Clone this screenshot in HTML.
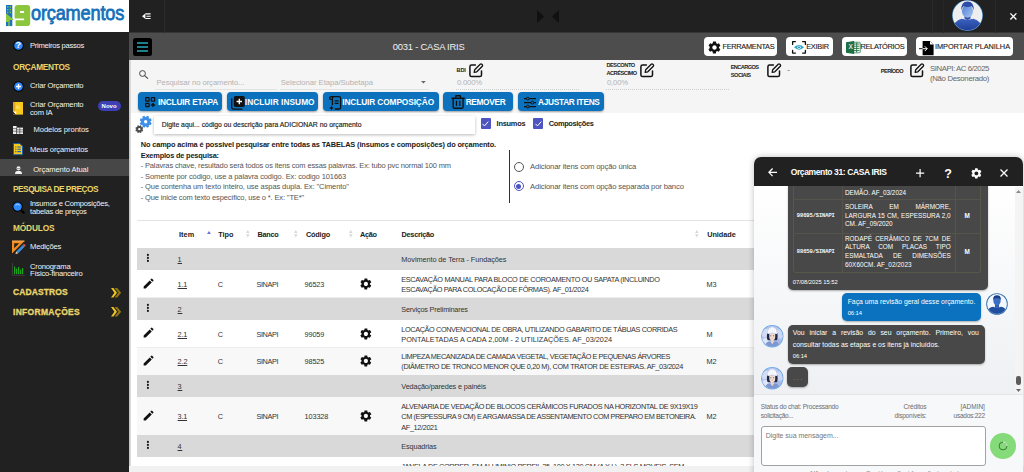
<!DOCTYPE html>
<html lang="pt-BR">
<head>
<meta charset="utf-8">
<title>i9 Orçamentos - 0031 - CASA IRIS</title>
<style>
*{box-sizing:border-box;margin:0;padding:0}
html,body{width:1024px;height:472px;overflow:hidden;background:#fff}
body{font-family:"Liberation Sans",sans-serif;font-size:9px;color:#333;position:relative}
.abs{position:absolute}
.t{position:absolute;white-space:nowrap;line-height:12px}
svg{position:absolute;display:block;overflow:visible}

/* ---------- sidebar ---------- */
#sidebar{position:absolute;left:0;top:0;width:129px;height:472px;background:#212121;color:#f2f2f2;z-index:5}
#logo{position:absolute;left:0;top:0;width:129px;height:32px;background:#fff}
#sidebar .it{position:absolute;left:30px;white-space:nowrap;font-size:7.600px;line-height:8px;color:#f4f4f4;letter-spacing:-.1px}
#sidebar .hd{position:absolute;left:13px;white-space:nowrap;font-size:8.3px;font-weight:bold;color:#e9d56c;line-height:12px;letter-spacing:-.25px}
#sidebar .active{position:absolute;left:0;top:158.800px;width:129px;height:17.300px;background:#474747}
.novo{position:absolute;left:97.600px;top:100.600px;width:23px;height:10.300px;border-radius:5.200px;background:#3d3fb5;color:#fff;font-size:6px;font-weight:bold;line-height:10.500px;text-align:center}

#brand{left:31.200px;top:1.300px;font-size:20.200px;line-height:24px;color:#1470b9;white-space:nowrap;transform:scaleX(.9);transform-origin:0 0;-webkit-text-stroke:.8px #1470b9;letter-spacing:-.2px}
#sidebar .hd.k{font-size:8.500px;letter-spacing:.5px;-webkit-text-stroke:.3px #e9d56c}
/* ---------- top bars ---------- */
#topbar{position:absolute;left:129px;top:0;width:895px;height:33px;background:#212121;border-bottom:1px solid #363636}
#subbar{position:absolute;left:129px;top:33px;width:895px;height:27px;background:#4d4d4d}
.wbtn{position:absolute;top:37px;height:19px;background:#fff;border-radius:4px;color:#222;font-size:7.4px;line-height:19.5px;white-space:nowrap}
.wbtn span{position:absolute;top:0;letter-spacing:-.1px;color:#1a1a1a;-webkit-text-stroke:.12px #1a1a1a}

/* ---------- toolbar ---------- */
#filters{position:absolute;left:129px;top:60px;width:895px;height:53px;background:#f5f5f5}
.lbl{position:absolute;font-size:5.6px;font-weight:bold;color:#222;line-height:8px;white-space:nowrap;letter-spacing:-.1px}
.ph{position:absolute;font-size:7.700px;color:#b3b3b3;white-space:nowrap;line-height:10px}
.bbtn{position:absolute;top:92px;height:19px;background:#0d72bd;border-radius:4px;color:#fff;font-weight:bold;font-size:8.3px;line-height:20.400px;white-space:nowrap;box-shadow:0 1px 2px rgba(0,0,0,.35)}
.bbtn span{position:absolute;top:0;letter-spacing:-.15px}

.cb{position:absolute;top:118.400px;width:10.300px;height:10.300px;background:#4f55c0;border-radius:1px}
.hb{font-size:7.400px;font-weight:bold;color:#1a1a1a}
.hl{font-size:7.500px;color:#555}
/* ---------- table ---------- */
#grid{position:absolute;left:137px;top:220px;width:640px;border-top:1px solid #e3e3e3}
.row{position:absolute;width:640px}
.row.g{background:#d9d9d9}
.row.s{background:#f8f8f8}
.row.w{background:#fff;border-bottom:1px solid #eee}
.c{position:absolute;white-space:nowrap;font-size:7.3px;line-height:10.5px;color:#333;letter-spacing:-.1px}
.c.u{text-decoration:underline}
.th{position:absolute;font-size:7.3px;font-weight:bold;color:#222;white-space:nowrap;line-height:12px;letter-spacing:-.15px}

/* ---------- chat ---------- */
#chat{position:absolute;left:754px;top:157px;width:269px;height:330px;background:#f7f8fa;border-radius:7px 7px 0 0;box-shadow:0 0 6px rgba(0,0,0,.25);overflow:hidden;z-index:8}
#chat .head{position:absolute;left:0;top:0;width:269px;height:29.300px;background:#212121;color:#fff}
#chat .body{position:absolute;left:0;top:29px;width:269px;height:209px;background:linear-gradient(180deg,#ffffff 0%,#eef0f3 100%);overflow:hidden}
.bub{position:absolute;border-radius:5px;color:#fff;font-size:7.3px;line-height:11.3px;box-shadow:0 1px 2px rgba(0,0,0,.3)}
.bub.d{background:#484848}
.bub.b{background:#0b72c0}
.tm{position:absolute;font-size:5.8px;color:#fff;white-space:nowrap;line-height:8px}
.ct{position:absolute;white-space:nowrap;font-size:6.400px;line-height:9px;color:#fff}
.j{white-space:normal!important;text-align:justify;text-align-last:justify}
.mono{position:absolute;white-space:nowrap;font-family:"Liberation Mono",monospace;font-size:5.300px;line-height:8px;color:#fff;-webkit-text-stroke:.15px #fff}
.cm{position:absolute;white-space:nowrap;font-size:6.850px;line-height:11px;color:#fff}
.ft{position:absolute;white-space:nowrap;font-size:6.500px;line-height:10px;color:#6b6b6b}
</style>
</head>
<body>

<!-- ======= TOP BAR ======= -->
<div id="topbar">
  <svg style="left:13px;top:12.6px" width="9" height="7" viewBox="0 0 9 7"><path d="M0 3.2L3.4 .4V6Z" fill="#fff"/><path d="M3.4 .9H8.6M4.4 3.2H8.6M3.4 5.5H8.6" stroke="#fff" stroke-width="1.1"/></svg>
  <div class="abs" style="left:34.5px;top:0;width:1px;height:33px;background:#2b2b2b"></div>
  <svg style="left:407.900px;top:10.400px" width="22" height="13" viewBox="0 0 22 13"><path d="M0 0L7.200 6.500L0 13Z" fill="#111"/><path d="M22 0L15 6.500L22 13Z" fill="#111"/></svg>
  <div class="abs" style="left:802.500px;top:0;width:1px;height:33px;background:#292929"></div>
  <div class="abs" style="left:813.500px;top:0;width:1px;height:33px;background:#272727"></div>
  <div class="abs" style="left:866.400px;top:0;width:1px;height:33px;background:#292929"></div>
  <svg style="left:822.800px;top:-.1px" width="31" height="31" viewBox="0 0 31 31"><defs><clipPath id="av"><circle cx="15.500" cy="15.500" r="14.900"/></clipPath><linearGradient id="avg" x1="0" y1="0" x2="1" y2="1"><stop offset="0" stop-color="#4f7dd6"/><stop offset="1" stop-color="#a9c6f0"/></linearGradient><linearGradient id="avb" x1="0" y1="0" x2="0" y2="1"><stop offset="0" stop-color="#3a62c0"/><stop offset="1" stop-color="#1f3c94"/></linearGradient></defs><circle cx="15.500" cy="15.500" r="15.500" fill="#2a6fa8"/><circle cx="15.500" cy="15.500" r="14.900" fill="#eeeeee"/><g clip-path="url(#av)"><path d="M.5 31Q1.500 20.500 9.500 18.800L15.500 19.800L21.500 18.800Q29.500 20.500 30.500 31Z" fill="url(#avb)"/><path d="M12.500 14H18.500V18.600L15.500 20L12.500 18.600Z" fill="#2b4aa6"/><ellipse cx="15.500" cy="11.300" rx="5.500" ry="6.400" fill="url(#avg)"/><path d="M9.300 10.500Q8.800 1.500 15.500 1.500Q22.200 1.500 21.700 10.500Q21 7 19.500 6.300Q15.500 7.500 11.500 6.300Q10 7 9.300 10.500Z" fill="#2d4ca6"/></g></svg>
  <svg style="left:880.600px;top:12.700px" width="6.800" height="6.800" viewBox="0 0 7 7"><path d="M.4 .4L6.600 6.600M6.600 .4L.4 6.600" stroke="#fff" stroke-width="1.400"/></svg>
</div>
<div id="subbar">
  <div class="abs" style="left:4px;top:5px;width:19px;height:18px;background:#000;border-radius:2.5px"></div>
  <svg style="left:8px;top:9px" width="11" height="10" viewBox="0 0 11 10"><path d="M0 1H11M0 5H11M0 9H11" stroke="#2aa9ba" stroke-width="1.6"/></svg>
  <span class="t" style="letter-spacing:-0.209px;left:263.800px;top:8.300px;font-size:9.400px;color:#f2f2f2">0031 - CASA IRIS</span>
</div>
<div class="wbtn" style="left:704.2px;width:73.300px">
  <svg style="left:3.300px;top:2.900px" width="15" height="15" viewBox="0 0 24 24"><path fill="#111" d="M19.140 12.940c.04-.3.060-.61.060-.94s-.02-.64-.07-.94l2.030-1.580a.49.49 0 0 0 .12-.61l-1.920-3.320a.488.488 0 0 0-.59-.22l-2.390.96c-.5-.38-1.030-.7-1.620-.94l-.36-2.540a.484.484 0 0 0-.48-.41h-3.840c-.24 0-.43.170-.47.410l-.36 2.540c-.59.240-1.130.570-1.620.94l-2.390-.96c-.22-.08-.47 0-.59.220L2.740 8.870c-.12.210-.08.470.12.610l2.030 1.580c-.5.300-.9.630-.9.940s.2.640.7.940l-2.030 1.580a.49.490 0 0 0-.12.610l1.920 3.320c.12.220.37.290.59.220l2.390-.96c.5.380 1.030.7 1.620.94l.36 2.540c.5.240.24.410.48.410h3.840c.24 0 .44-.17.470-.41l.36-2.540c.59-.24 1.130-.56 1.620-.94l2.390.96c.22.080.47 0 .59-.22l1.920-3.320c.12-.22.070-.47-.12-.61l-2.010-1.580zM12 15.600c-1.980 0-3.600-1.620-3.600-3.600s1.620-3.600 3.600-3.600 3.600 1.620 3.600 3.600-1.620 3.600-3.600 3.600z"/></svg>
  <span style="letter-spacing:-0.316px;left:18.300px">FERRAMENTAS</span>
</div>
<div class="wbtn" style="left:786.2px;width:47px">
  <svg style="left:5.500px;top:4.300px" width="14" height="12.700" viewBox="0 0 14 12.700"><path d="M.6 3.400V.6H3.400M10.600 .6H13.400V3.400M13.400 9.300V12.100H10.600M3.400 12.100H.6V9.300" stroke="#111" stroke-width="1.300" fill="none" stroke-linecap="round" stroke-linejoin="round"/><path d="M2 6.350Q7 1.700 12 6.350Q7 11 2 6.350Z" fill="#26a6c9"/><circle cx="7" cy="6.350" r="1.700" fill="#e9f7fb"/><circle cx="7" cy="6.350" r=".9" fill="#1b6f8a"/></svg>
  <span style="letter-spacing:-0.27px;left:20px">EXIBIR</span>
</div>
<div class="wbtn" style="left:842.2px;width:65px">
  <svg style="left:3.800px;top:3.800px" width="14.500" height="13" viewBox="0 0 14.500 13"><rect x="5" y="1.200" width="9.300" height="10.600" rx=".8" fill="#fff" stroke="#1d7044" stroke-width=".7"/><path d="M8 3H13.500M8 5.200H13.500M8 7.400H13.500M8 9.600H13.500M10.700 1.500V11.500" stroke="#1d7044" stroke-width=".9"/><path d="M0 1.300L8.200 0V13L0 11.700Z" fill="#1d7044"/></svg>
  <span class="abs" style="left:6.200px;top:0;font-size:6.500px;font-weight:bold;color:#fff;line-height:19.500px">X</span>
  <span style="letter-spacing:-0.328px;left:18.300px">RELATÓRIOS</span>
</div>
<div class="wbtn" style="left:916px;width:97px">
  <svg style="left:3.400px;top:3.600px" width="15" height="14.200" viewBox="0 0 15 14.200"><path d="M3.600 0H11L14.600 3.600V14.200H3.600Z" fill="#000"/><path d="M11 0V3.600H14.600Z" fill="#fff"/><path d="M0 7.700H8.200M5.800 5.300L8.200 7.700L5.800 10.100" stroke="#fff" stroke-width="1" fill="none"/><path d="M0 7.700H3.600" stroke="#111" stroke-width="1"/></svg>
  <span style="letter-spacing:-0.066px;left:19px">IMPORTAR PLANILHA</span>
</div>
<div id="filters"></div>
<div class="abs" style="left:129px;top:60px;width:2px;height:412px;background:linear-gradient(90deg,#bdbdbd,#e6e6e6);z-index:6"></div>
<!-- search / filters -->
<svg style="left:139.300px;top:69.500px" width="9.500" height="9" viewBox="0 0 9.500 9"><circle cx="3.500" cy="3.500" r="2.900" stroke="#444" stroke-width="1" fill="none"/><path d="M5.600 5.600L9 8.700" stroke="#444" stroke-width="1.100"/></svg>
<span class="ph" style="letter-spacing:-0.074px;left:156.400px;top:78.300px">Pesquisar no orçamento...</span>
<div class="abs" style="left:155.400px;top:88.500px;width:121.500px;height:1px;background:#e2e2e2"></div>
<span class="ph" style="letter-spacing:-0.06px;left:280.800px;top:78.300px">Selecionar Etapa/Subetapa</span>
<svg style="left:421px;top:81.300px" width="4.800" height="2.600" viewBox="0 0 4.800 2.600"><path d="M0 0H4.800L2.400 2.600Z" fill="#666"/></svg>
<div class="abs" style="left:279.500px;top:88.500px;width:149.300px;height:1px;background:#e2e2e2"></div>

<span class="lbl" style="letter-spacing:-0.147px;left:456.500px;top:66.100px">BDI</span>
<svg style="left:468.5px;top:62.7px" width="14.5" height="14.5" viewBox="0 0 14.5 14.5"><path d="M6.4 2H2.6Q.9 2 .9 3.700V11.900Q.9 13.600 2.600 13.600H10.800Q12.500 13.600 12.500 11.900V8.100" stroke="#111" stroke-width="1.500" fill="none" stroke-linecap="round"/><path d="M5.200 9.300L5.700 6.700L11.200 1.200Q12 .5 12.800 1.200L13.300 1.700Q14 2.500 13.300 3.300L7.800 8.800Z" stroke="#111" stroke-width="1.300" fill="none" stroke-linejoin="round"/></svg>
<span class="ph" style="letter-spacing:-0.196px;left:457px;top:78px">0.000%</span>
<div class="abs" style="left:456px;top:88.500px;width:123px;height:0;border-top:1px dotted #cfcfcf"></div>

<span class="lbl" style="letter-spacing:-0.4px;left:606.400px;top:60.800px">DESCONTO</span>
<span class="lbl" style="letter-spacing:-0.431px;left:606.400px;top:68.600px">ACRÉSCIMO</span>
<svg style="left:640.4px;top:62.7px" width="14.5" height="14.5" viewBox="0 0 14.5 14.5"><path d="M6.4 2H2.6Q.9 2 .9 3.700V11.900Q.9 13.600 2.600 13.600H10.800Q12.500 13.600 12.500 11.900V8.100" stroke="#111" stroke-width="1.500" fill="none" stroke-linecap="round"/><path d="M5.200 9.300L5.700 6.700L11.200 1.200Q12 .5 12.800 1.200L13.300 1.700Q14 2.500 13.300 3.300L7.800 8.800Z" stroke="#111" stroke-width="1.300" fill="none" stroke-linejoin="round"/></svg>
<span class="ph" style="letter-spacing:-0.163px;left:607px;top:78px">0,00%</span>
<div class="abs" style="left:606px;top:88.500px;width:123px;height:0;border-top:1px dotted #cfcfcf"></div>

<span class="lbl" style="letter-spacing:-0.564px;left:730.700px;top:63.200px">ENCARGOS</span>
<span class="lbl" style="letter-spacing:-0.443px;left:730.700px;top:70.800px">SOCIAIS</span>
<svg style="left:766.6px;top:62.7px" width="14.5" height="14.5" viewBox="0 0 14.5 14.5"><path d="M6.4 2H2.6Q.9 2 .9 3.700V11.900Q.9 13.600 2.600 13.600H10.800Q12.500 13.600 12.500 11.900V8.100" stroke="#111" stroke-width="1.500" fill="none" stroke-linecap="round"/><path d="M5.200 9.300L5.700 6.700L11.200 1.200Q12 .5 12.800 1.200L13.300 1.700Q14 2.500 13.300 3.300L7.800 8.800Z" stroke="#111" stroke-width="1.300" fill="none" stroke-linejoin="round"/></svg>
<span class="t" style="left:787.300px;top:63.700px;font-size:8px;color:#555">-</span>

<span class="lbl" style="letter-spacing:-0.471px;left:880.700px;top:67.300px">PERÍODO</span>
<svg style="left:909.9px;top:62.7px" width="14.5" height="14.5" viewBox="0 0 14.5 14.5"><path d="M6.4 2H2.6Q.9 2 .9 3.700V11.900Q.9 13.600 2.600 13.600H10.800Q12.500 13.600 12.500 11.900V8.100" stroke="#111" stroke-width="1.500" fill="none" stroke-linecap="round"/><path d="M5.200 9.300L5.700 6.700L11.200 1.200Q12 .5 12.800 1.200L13.300 1.700Q14 2.500 13.300 3.300L7.800 8.800Z" stroke="#111" stroke-width="1.300" fill="none" stroke-linejoin="round"/></svg>
<span class="t" style="letter-spacing:-0.43px;left:930px;top:63px;font-size:7.800px;color:#666">SINAPI: AC 6/2025</span>
<span class="t" style="letter-spacing:-0.322px;left:930px;top:73.200px;font-size:7.800px;color:#666">(Não Desonerado)</span>

<!-- action buttons -->
<div class="bbtn" style="left:138.400px;width:84px">
  <svg style="left:6.800px;top:5px" width="10.400" height="10.400" viewBox="0 0 10.400 10.400"><rect x=".7" y=".7" width="3.400" height="3.400" rx=".6" stroke="#111" stroke-width="1.300" fill="none"/><rect x="6.300" y=".7" width="3.400" height="3.400" rx=".6" stroke="#111" stroke-width="1.300" fill="none"/><rect x=".7" y="6.300" width="3.400" height="3.400" rx=".6" stroke="#111" stroke-width="1.300" fill="none"/><path d="M8 5.900V10.100M5.900 8H10.100" stroke="#111" stroke-width="1.300"/></svg>
  <span style="letter-spacing:-0.225px;left:19.600px">INCLUIR ETAPA</span>
</div>
<div class="bbtn" style="left:226.700px;width:91.300px">
  <svg style="left:3.900px;top:4px" width="13.800" height="13.800" viewBox="0 0 13.800 13.800"><path d="M.7 2.800V11.400Q.7 13.100 2.400 13.100H11" stroke="#111" stroke-width="1.300" fill="none" stroke-linecap="round"/><rect x="2.800" y="0" width="11" height="11" rx="1.700" fill="#111"/><path d="M8.300 2.800V8.200M5.600 5.500H11" stroke="#fff" stroke-width="1.300"/></svg>
  <span style="letter-spacing:0.048px;left:18.100px">INCLUIR INSUMO</span>
</div>
<div class="bbtn" style="left:322.700px;width:116.200px">
  <svg style="left:6.300px;top:3.500px" width="12.300" height="13.800" viewBox="0 0 12.300 13.800"><path d="M3.400 9.200V2.300Q3.400 .7 5 .7H10Q11.600 .7 11.600 2.300V11.400Q11.600 13 10 13H5.800" stroke="#111" stroke-width="1.300" fill="none"/><path d="M3.400 3.400H1.800Q.7 3.400 .7 2.200Q.7 .7 2.200 .7H5" stroke="#111" stroke-width="1.300" fill="none"/><path d="M5.600 4.800H9.600M5.600 7.400H9.600" stroke="#111" stroke-width="1.200"/><path d="M2.500 9.600L3.200 11.300L4.900 12L3.200 12.700L2.500 14.400L1.800 12.700L.1 12L1.800 11.300Z" fill="#111"/></svg>
  <span style="letter-spacing:-0.098px;left:19.500px">INCLUIR COMPOSIÇÃO</span>
</div>
<div class="bbtn" style="left:443.400px;width:69.300px">
  <svg style="left:7.600px;top:3px" width="14.300" height="14" viewBox="0 0 14.300 14"><path d="M.5 3.300H13.800M4.800 3.300V1.300Q4.800 .7 5.400 .7H8.900Q9.500 .7 9.500 1.300V3.300" stroke="#111" stroke-width="1.400" fill="none"/><path d="M2.200 3.300V12Q2.200 13.300 3.500 13.300H10.800Q12.100 13.300 12.100 12V3.300" stroke="#111" stroke-width="1.400" fill="none"/><path d="M5.500 5.800V11M8.800 5.800V11" stroke="#111" stroke-width="1.300"/></svg>
  <span style="letter-spacing:-0.334px;left:22.300px">REMOVER</span>
</div>
<div class="bbtn" style="left:518.200px;width:85.700px">
  <svg style="left:5.800px;top:4.500px" width="12" height="11.300" viewBox="0 0 12 11.300"><path d="M0 1.700H12M0 5.650H12M0 9.600H12" stroke="#111" stroke-width="1.200"/><circle cx="3.800" cy="1.700" r="1.400" fill="#0d72bd" stroke="#111" stroke-width="1"/><circle cx="8.400" cy="5.650" r="1.400" fill="#0d72bd" stroke="#111" stroke-width="1"/><circle cx="3.800" cy="9.600" r="1.400" fill="#0d72bd" stroke="#111" stroke-width="1"/></svg>
  <span style="letter-spacing:-0.284px;left:19.800px">AJUSTAR ITENS</span>
</div>

<!-- add-item search row -->
<svg style="left:134.500px;top:114.600px" width="18" height="19" viewBox="0 0 18 19"><path fill-rule="evenodd" fill="#3d8fe8" d="M15.47 7.23L16.67 7.94L15.80 10.05L14.45 9.70L13.70 10.45L14.05 11.80L11.94 12.67L11.23 11.47L10.17 11.47L9.46 12.67L7.35 11.80L7.70 10.45L6.95 9.70L5.60 10.05L4.73 7.94L5.93 7.23L5.93 6.17L4.73 5.46L5.60 3.35L6.95 3.70L7.70 2.95L7.35 1.60L9.46 0.73L10.17 1.93L11.23 1.93L11.94 0.73L14.05 1.60L13.70 2.95L14.45 3.70L15.80 3.35L16.67 5.46L15.47 6.17ZM9.00 6.70a1.70 1.70 0 1 0 3.40 0a1.70 1.70 0 1 0 -3.40 0Z"/><path fill-rule="evenodd" fill="#4a4a4a" d="M7.38 14.54L8.22 15.01L7.64 16.40L6.72 16.14L6.24 16.62L6.50 17.54L5.11 18.12L4.64 17.28L3.96 17.28L3.49 18.12L2.10 17.54L2.36 16.62L1.88 16.14L0.96 16.40L0.38 15.01L1.22 14.54L1.22 13.86L0.38 13.39L0.96 12.00L1.88 12.26L2.36 11.78L2.10 10.86L3.49 10.28L3.96 11.12L4.64 11.12L5.11 10.28L6.50 10.86L6.24 11.78L6.72 12.26L7.64 12.00L8.22 13.39L7.38 13.86ZM3.15 14.20a1.15 1.15 0 1 0 2.30 0a1.15 1.15 0 1 0 -2.30 0Z"/></svg>
<div class="abs" style="left:153.900px;top:115.500px;width:321.100px;height:18.800px;background:#fff;box-shadow:0 1px 3px rgba(0,0,0,.28)"></div>
<span class="t" style="letter-spacing:0.003px;left:161.700px;top:118.600px;font-size:6.850px;color:#222;-webkit-text-stroke:.15px #222">Digite aqui... código ou descrição para ADICIONAR no orçamento</span>
<div class="cb" style="left:480.600px"></div><svg style="left:482.400px;top:120.800px" width="6.800" height="5.600" viewBox="0 0 6.800 5.600"><path d="M.5 2.900L2.500 4.900L6.300 .6" stroke="#fff" stroke-width="1" fill="none"/></svg>
<span class="t" style="letter-spacing:-0.241px;left:496.600px;top:118px;font-size:7.4px;font-weight:bold;color:#222">Insumos</span>
<div class="cb" style="left:532.700px"></div><svg style="left:534.500px;top:120.800px" width="6.800" height="5.600" viewBox="0 0 6.800 5.600"><path d="M.5 2.900L2.500 4.900L6.300 .6" stroke="#fff" stroke-width="1" fill="none"/></svg>
<span class="t" style="letter-spacing:-0.323px;left:548.700px;top:118px;font-size:7.4px;font-weight:bold;color:#222">Composições</span>

<!-- help text -->
<span class="t hb" style="letter-spacing:-0.131px;left:140.700px;top:138.800px">No campo acima é possivel pesquisar entre todas as TABELAS (insumos e composições) do orçamento.</span>
<span class="t hb" style="letter-spacing:-0.188px;left:140.700px;top:149.700px">Exemplos de pesquisa:</span>
<span class="t hl" style="letter-spacing:-0.145px;left:140.700px;top:159.800px">- Palavras chave, resultado será todos os itens com essas palavras. Ex: tubo pvc normal 100 mm</span>
<span class="t hl" style="letter-spacing:-0.098px;left:140.700px;top:170.700px">- Somente por código, use a palavra codigo. Ex: codigo 101663</span>
<span class="t hl" style="letter-spacing:-0.095px;left:140.700px;top:181.100px">- Que contenha um texto inteiro, use aspas dupla. Ex: "Cimento"</span>
<span class="t hl" style="letter-spacing:-0.142px;left:140.700px;top:192px">- Que inicie com texto específico, use o *. Ex: "TE*"</span>
<div class="abs" style="left:508.600px;top:150px;width:1px;height:53px;background:#333"></div>
<div class="abs" style="left:513.700px;top:161.600px;width:10px;height:10px;border:1px solid #555;border-radius:50%"></div>
<span class="t hl" style="letter-spacing:-0.154px;left:530.100px;top:161.100px;font-size:7.700px">Adicionar itens com opção única</span>
<div class="abs" style="left:513.700px;top:181.200px;width:10px;height:10px;border:1px solid #4f55c0;border-radius:50%"></div>
<div class="abs" style="left:516.200px;top:183.700px;width:5px;height:5px;background:#4f55c0;border-radius:50%"></div>
<span class="t hl" style="letter-spacing:-0.159px;left:530.100px;top:180.700px;font-size:7.700px">Adicionar itens com opção separada por banco</span>

<!-- ======= SIDEBAR ======= -->
<div id="sidebar">
  <div id="logo">
    <svg style="left:5.900px;top:4.800px" width="25" height="21.200" viewBox="0 0 25 21.200">
      <rect x="0" y="0" width="6.300" height="21.100" fill="#1b75bb"/>
      <g fill="#8cc63f"><rect x="1.100" y="1.300" width="1.300" height="1.400"/><rect x="3.700" y="1.300" width="1.300" height="1.400"/><rect x="1.100" y="4" width="1.300" height="1.400"/><rect x="3.700" y="4" width="1.300" height="1.400"/><rect x="1.100" y="6.700" width="1.300" height="1.400"/><rect x="3.700" y="6.700" width="1.300" height="1.400"/></g>
      <path d="M0 8.200L8 14.900H3.700V21.100H2.300V17H0Z" fill="#8cc63f"/>
      <path d="M8.600 3.200Q8.600 0 11.800 0H21.300Q24.200 0 24.200 2.900V18Q24.200 21.100 21.100 21.100H9.600V15.200H18.100V13.500H8.600Z" fill="#8cc63f"/>
      <rect x="13.900" y="5.900" width="4.200" height="2.200" rx=".9" fill="#fff"/>
    </svg>
    <span class="abs" id="brand">orçamentos</span>
  </div>

  <svg style="left:12.5px;top:40px" width="11" height="11" viewBox="0 0 11 11"><circle cx="5.5" cy="5.5" r="5.3" fill="#000"/><circle cx="5.5" cy="5.5" r="4.3" fill="#2e8bff"/></svg>
  <span class="abs" style="left:15.500px;top:40.300px;font-size:9px;font-weight:bold;color:#fff;line-height:10px">?</span>
  <span class="it" style="letter-spacing:-0.266px;top:42px">Primeiros passos</span>

  <span class="hd" style="letter-spacing:-0.298px;top:61px">ORÇAMENTOS</span>

  <svg style="left:12.5px;top:80.5px" width="11" height="11" viewBox="0 0 11 11"><circle cx="5.5" cy="5.5" r="5.3" fill="#000"/><circle cx="5.5" cy="5.5" r="4.3" fill="#2e8bff"/><path d="M5.5 3v5M3 5.5h5" stroke="#fff" stroke-width="1.3"/></svg>
  <span class="it" style="letter-spacing:-0.182px;top:82px">Criar Orçamento</span>

  <svg style="left:13px;top:102px" width="10" height="13" viewBox="0 0 10 13"><rect x="0" y="0" width="10" height="12.6" fill="#f7c81e"/><rect x="0" y="0" width="2.2" height="12.6" fill="#e3a612"/><path d="M0 9.6 L3.2 12.6 H0Z" fill="#212121"/><path d="M0 9.6 H3.2 V12.6Z" fill="#fff"/></svg>
  <span class="abs" style="left:16px;top:104.5px;font-size:4.5px;color:#fff3b0;line-height:6px">Ai</span>
  <span class="it" style="letter-spacing:-0.182px;top:101px">Criar Orçamento</span>
  <span class="it" style="letter-spacing:-0.19px;top:108.6px">com IA</span>
  <span class="novo">Novo</span>

  <svg style="left:13px;top:125.5px" width="10" height="8" viewBox="0 0 10 8"><path d="M0 0h3.6v8H0z" fill="#eee"/><path d="M3.6 1.6H10V8H3.6z" fill="#eee"/><path d="M3.6 1.6V8M0 2.6h3.6M0 5.2h3.6M3.6 3.8H10M3.6 5.9H10M6.8 1.6V8" stroke="#212121" stroke-width=".55"/></svg>
  <span class="it" style="letter-spacing:-0.057px;left:33.5px;top:126px">Modelos prontos</span>

  <svg style="left:13.3px;top:143.2px" width="10" height="12.2" viewBox="0 0 10 12.2"><path d="M.5 .5h6.3l2.7 2.7v8.5h-9z" fill="#f7c81e" stroke="#1d5fa8" stroke-width="1"/><path d="M2.2 4h1.2M4.4 4h3.4M2.2 6.3h1.2M4.4 6.3h3.4M2.2 8.6h1.2M4.4 8.6h3.4" stroke="#1d5fa8" stroke-width="1.1"/></svg>
  <span class="it" style="letter-spacing:-0.164px;top:145.5px">Meus orçamentos</span>

  <div class="active"></div>
  <svg style="left:14.5px;top:166px" width="7" height="8" viewBox="0 0 7 8"><circle cx="3.5" cy="2.2" r="2" fill="#f2f2f2"/><path d="M0 8 Q0 4.8 3.5 4.8 Q7 4.8 7 8Z" fill="#f2f2f2"/><path d="M1.3 2.6h4.4" stroke="#555" stroke-width=".6"/></svg>
  <span class="it" style="letter-spacing:-0.097px;left:33.2px;top:166.2px">Orçamento Atual</span>

  <span class="hd" style="letter-spacing:-0.486px;top:182.5px">PESQUISA DE PREÇOS</span>

  <svg style="left:12px;top:201px" width="13" height="13" viewBox="0 0 13 13"><path d="M8.5 8.5l3.3 3.3" stroke="#000" stroke-width="2.2" stroke-linecap="round"/><circle cx="5.6" cy="5.6" r="5.2" fill="#000"/><circle cx="5.6" cy="5.6" r="4.2" fill="#2e8bff"/><path d="M3.4 4.2Q5.6 2.2 7.8 4.2" stroke="#cfe4ff" stroke-width=".8" fill="none"/></svg>
  <span class="it" style="letter-spacing:-0.258px;top:199.8px">Insumos e Composições,</span>
  <span class="it" style="letter-spacing:-0.191px;top:207.5px">tabelas de preços</span>

  <span class="hd" style="letter-spacing:-0.158px;top:221.8px">MÓDULOS</span>

  <svg style="left:11.8px;top:240.8px" width="13" height="13" viewBox="0 0 13 13"><path d="M0 0H12.5L0 12.5Z" fill="#f58a1f"/><path d="M2.2 2.2H7.2L2.2 7.2Z" fill="#212121"/><path d="M0 0H12.5" stroke="#ffb35c" stroke-width="1"/><path d="M4.2 11.6 L10.8 5 L12.6 6.8 L6 13.4Z" fill="#3b8ed8" transform="translate(0,-1)"/><path d="M10.8 4 L12 2.8 L13.8 4.6 L12.6 5.8Z" fill="#e2574c"/><path d="M4.2 10.6 L3.4 13 L6 12.4Z" fill="#f3d9a4"/></svg>
  <span class="it" style="letter-spacing:-0.162px;top:243.3px">Medições</span>

  <svg style="left:11.8px;top:263.3px" width="13" height="13" viewBox="0 0 13 13"><path d="M.4 0V12.2H12.6" stroke="#4a4a4a" stroke-width=".8" fill="none"/><path d="M2.6 3.5V11M4.6 5.5V11M6.6 4V11M8.6 6.5V11M10.6 5V11" stroke="#1aa51a" stroke-width="1.2"/></svg>
  <span class="it" style="letter-spacing:-0.172px;top:262.6px">Cronograma</span>
  <span class="it" style="letter-spacing:-0.189px;top:269.8px">Físico-financeiro</span>

  <span class="hd k" style="letter-spacing:0.106px;top:286.200px">CADASTROS</span>
  <svg style="left:111.400px;top:287.6px" width="10.200" height="9.400" viewBox="0 0 10.200 9.400"><defs><pattern id="pc1" width="1.600" height="1.600" patternUnits="userSpaceOnUse"><rect width="1.600" height="1.600" fill="#4a3f10"/><circle cx=".8" cy=".8" r=".62" fill="#f0c420"/></pattern></defs><path d="M3.600 0H6.200L10.200 4.700L6.200 9.400H3.600L7.400 4.700Z" fill="url(#pc1)"/><path d="M0 0H2.400L6 4.700L2.400 9.400H0L3.400 4.700Z" fill="#f0c420"/></svg>
  <span class="hd k" style="letter-spacing:0.295px;top:305.600px">INFORMAÇÕES</span>
  <svg style="left:111.400px;top:307px" width="10.200" height="9.400" viewBox="0 0 10.200 9.400"><defs><pattern id="pc2" width="1.600" height="1.600" patternUnits="userSpaceOnUse"><rect width="1.600" height="1.600" fill="#4a3f10"/><circle cx=".8" cy=".8" r=".62" fill="#f0c420"/></pattern></defs><path d="M3.600 0H6.200L10.200 4.700L6.200 9.400H3.600L7.400 4.700Z" fill="url(#pc2)"/><path d="M0 0H2.400L6 4.700L2.400 9.400H0L3.400 4.700Z" fill="#f0c420"/></svg>
</div>

<!-- ======= TABLE ======= -->
<!-- table -->
<div class="abs" style="left:137px;top:220px;width:640px;height:1px;background:#e4e4e4"></div>
<span class="th" style="letter-spacing:0.123px;left:178.9px;top:228.500px">Item</span>
<span class="th" style="letter-spacing:-0.02px;left:218.3px;top:228.500px">Tipo</span>
<span class="th" style="letter-spacing:-0.301px;left:257.6px;top:228.500px">Banco</span>
<span class="th" style="letter-spacing:-0.172px;left:305.9px;top:228.500px">Código</span>
<span class="th" style="letter-spacing:-0.286px;left:360px;top:228.500px">Ação</span>
<span class="th" style="letter-spacing:-0.276px;left:401.6px;top:228.500px">Descrição</span>
<span class="th" style="letter-spacing:-0.041px;left:707.2px;top:228.500px">Unidade</span>
<svg style="left:207.100px;top:230.600px" width="4" height="2.900" viewBox="0 0 4 2.900"><path d="M0 2.900L2 0L4 2.900Z" fill="#6f74d6"/></svg>
<svg style="left:246.2px;top:230.400px" width="3.600" height="7.400" viewBox="0 0 3.600 7.400"><path d="M0 3.100L1.800 0L3.600 3.100Z" fill="#d8d8d8"/><path d="M0 4.300L1.800 7.400L3.600 4.300Z" fill="#d8d8d8"/></svg>
<svg style="left:293.9px;top:230.400px" width="3.600" height="7.400" viewBox="0 0 3.600 7.400"><path d="M0 3.100L1.800 0L3.600 3.100Z" fill="#d8d8d8"/><path d="M0 4.300L1.800 7.400L3.600 4.300Z" fill="#d8d8d8"/></svg>
<svg style="left:348.5px;top:230.400px" width="3.600" height="7.400" viewBox="0 0 3.600 7.400"><path d="M0 3.100L1.800 0L3.600 3.100Z" fill="#d8d8d8"/><path d="M0 4.300L1.800 7.400L3.600 4.300Z" fill="#d8d8d8"/></svg>
<svg style="left:695.2px;top:230.400px" width="3.600" height="7.400" viewBox="0 0 3.600 7.400"><path d="M0 3.100L1.800 0L3.600 3.100Z" fill="#d8d8d8"/><path d="M0 4.300L1.800 7.400L3.600 4.300Z" fill="#d8d8d8"/></svg>
<div class="row g" style="left:137px;top:248px;height:22px"></div>
<svg style="left:147.100px;top:254.1px" width="1.800" height="7.800" viewBox="0 0 1.800 7.800"><circle cx=".9" cy=".9" r="1.050" fill="#111"/><circle cx=".9" cy="3.900" r="1.050" fill="#111"/><circle cx=".9" cy="6.900" r="1.050" fill="#111"/></svg>
<span class="c u" style="letter-spacing:0.344px;left:177.600px;top:255.05px">1</span>
<span class="c" style="letter-spacing:-0.064px;left:401.300px;top:255.05px">Movimento de Terra - Fundações</span>
<div class="row w" style="left:137px;top:270px;height:28px"></div>
<svg style="left:141.700px;top:276.6px" width="13.200" height="13.200" viewBox="0 0 24 24"><path fill="#111" d="M3 17.250V21h3.750L17.810 9.940l-3.750-3.750L3 17.250zM20.710 7.040a.996.996 0 0 0 0-1.410l-2.340-2.340a.996.996 0 0 0-1.410 0l-1.830 1.830 3.750 3.750 1.830-1.830z"/></svg>
<span class="c u" style="letter-spacing:-0.25px;left:177.600px;top:280.05px">1.1</span>
<span class="c" style="left:217.800px;top:280.05px">C</span>
<span class="c" style="letter-spacing:-0.355px;left:256.400px;top:280.05px">SINAPI</span>
<span class="c" style="letter-spacing:-0.138px;left:304.600px;top:280.05px">96523</span>
<svg style="left:359.300px;top:276.8px" width="13.800" height="13.800" viewBox="0 0 24 24"><path fill="#111" d="M19.140 12.940c.04-.3.060-.61.060-.94s-.02-.64-.07-.94l2.030-1.580a.49.49 0 0 0 .12-.61l-1.920-3.320a.488.488 0 0 0-.59-.22l-2.390.96c-.5-.38-1.030-.7-1.620-.94l-.36-2.540a.484.484 0 0 0-.48-.41h-3.840c-.24 0-.43.170-.47.410l-.36 2.540c-.59.240-1.130.570-1.620.94l-2.390-.96c-.22-.08-.47 0-.59.220L2.740 8.870c-.12.210-.08.470.12.610l2.030 1.580c-.5.300-.9.630-.9.940s.2.640.7.940l-2.030 1.580a.49.490 0 0 0-.12.610l1.920 3.320c.12.220.37.290.59.220l2.390-.96c.5.380 1.030.7 1.620.94l.36 2.540c.5.240.24.410.48.410h3.840c.24 0 .44-.17.470-.41l.36-2.540c.59-.24 1.130-.56 1.620-.94l2.390.96c.22.080.47 0 .59-.22l1.920-3.320c.12-.22.070-.47-.12-.61l-2.010-1.580zM12 15.600c-1.980 0-3.600-1.620-3.600-3.600s1.620-3.600 3.600-3.600 3.600 1.620 3.600 3.600-1.620 3.600-3.600 3.600z"/></svg>
<span class="c" style="left:706.500px;top:280.05px">M3</span>
<span class="c" style="letter-spacing:-0.328px;left:401.300px;top:274.90px">ESCAVAÇÃO MANUAL PARA BLOCO DE COROAMENTO OU SAPATA (INCLUINDO</span>
<span class="c" style="letter-spacing:-0.387px;left:401.300px;top:285.20px">ESCAVAÇÃO PARA COLOCAÇÃO DE FÔRMAS). AF_01/2024</span>
<div class="row g" style="left:137px;top:298px;height:22px"></div>
<svg style="left:147.100px;top:304.1px" width="1.800" height="7.800" viewBox="0 0 1.800 7.800"><circle cx=".9" cy=".9" r="1.050" fill="#111"/><circle cx=".9" cy="3.900" r="1.050" fill="#111"/><circle cx=".9" cy="6.900" r="1.050" fill="#111"/></svg>
<span class="c u" style="letter-spacing:0.644px;left:177.600px;top:305.05px">2</span>
<span class="c" style="letter-spacing:-0.198px;left:401.300px;top:305.05px">Serviços Preliminares</span>
<div class="row w" style="left:137px;top:320px;height:27.5px"></div>
<svg style="left:141.700px;top:326.35px" width="13.200" height="13.200" viewBox="0 0 24 24"><path fill="#111" d="M3 17.250V21h3.750L17.810 9.940l-3.750-3.750L3 17.250zM20.710 7.040a.996.996 0 0 0 0-1.410l-2.340-2.340a.996.996 0 0 0-1.410 0l-1.830 1.830 3.750 3.750 1.830-1.830z"/></svg>
<span class="c u" style="letter-spacing:-0.25px;left:177.600px;top:329.80px">2.1</span>
<span class="c" style="left:217.800px;top:329.80px">C</span>
<span class="c" style="letter-spacing:-0.355px;left:256.400px;top:329.80px">SINAPI</span>
<span class="c" style="letter-spacing:-0.138px;left:304.600px;top:329.80px">99059</span>
<svg style="left:359.300px;top:326.55px" width="13.800" height="13.800" viewBox="0 0 24 24"><path fill="#111" d="M19.140 12.940c.04-.3.060-.61.060-.94s-.02-.64-.07-.94l2.030-1.580a.49.49 0 0 0 .12-.61l-1.920-3.320a.488.488 0 0 0-.59-.22l-2.390.96c-.5-.38-1.030-.7-1.620-.94l-.36-2.540a.484.484 0 0 0-.48-.41h-3.840c-.24 0-.43.170-.47.410l-.36 2.540c-.59.240-1.130.570-1.620.94l-2.390-.96c-.22-.08-.47 0-.59.220L2.740 8.870c-.12.210-.08.470.12.610l2.030 1.580c-.5.300-.9.630-.9.940s.2.640.7.940l-2.030 1.580a.49.490 0 0 0-.12.610l1.920 3.320c.12.220.37.290.59.220l2.390-.96c.5.380 1.030.7 1.620.94l.36 2.540c.5.240.24.410.48.410h3.840c.24 0 .44-.17.470-.41l.36-2.540c.59-.24 1.130-.56 1.620-.94l2.390.96c.22.080.47 0 .59-.22l1.920-3.320c.12-.22.070-.47-.12-.61l-2.010-1.580zM12 15.600c-1.980 0-3.600-1.620-3.600-3.600s1.620-3.600 3.600-3.600 3.600 1.620 3.600 3.600-1.620 3.600-3.600 3.600z"/></svg>
<span class="c" style="left:706.500px;top:329.80px">M</span>
<span class="c" style="letter-spacing:-0.377px;left:401.300px;top:324.65px">LOCAÇÃO CONVENCIONAL DE OBRA, UTILIZANDO GABARITO DE TÁBUAS CORRIDAS</span>
<span class="c" style="letter-spacing:-0.014px;left:401.300px;top:334.95px">PONTALETADAS A CADA 2,00M - 2 UTILIZAÇÕES. AF_03/2024</span>
<div class="row s" style="left:137px;top:347.5px;height:27.5px"></div>
<svg style="left:141.700px;top:353.85px" width="13.200" height="13.200" viewBox="0 0 24 24"><path fill="#111" d="M3 17.250V21h3.750L17.810 9.940l-3.750-3.750L3 17.250zM20.710 7.040a.996.996 0 0 0 0-1.410l-2.340-2.340a.996.996 0 0 0-1.410 0l-1.830 1.830 3.750 3.750 1.830-1.830z"/></svg>
<span class="c u" style="letter-spacing:-0.15px;left:177.600px;top:357.30px">2.2</span>
<span class="c" style="left:217.800px;top:357.30px">C</span>
<span class="c" style="letter-spacing:-0.355px;left:256.400px;top:357.30px">SINAPI</span>
<span class="c" style="letter-spacing:-0.138px;left:304.600px;top:357.30px">98525</span>
<svg style="left:359.300px;top:354.05px" width="13.800" height="13.800" viewBox="0 0 24 24"><path fill="#111" d="M19.140 12.940c.04-.3.060-.61.060-.94s-.02-.64-.07-.94l2.030-1.580a.49.49 0 0 0 .12-.61l-1.920-3.320a.488.488 0 0 0-.59-.22l-2.390.96c-.5-.38-1.030-.7-1.620-.94l-.36-2.540a.484.484 0 0 0-.48-.41h-3.840c-.24 0-.43.170-.47.410l-.36 2.540c-.59.240-1.130.570-1.620.94l-2.390-.96c-.22-.08-.47 0-.59.220L2.740 8.870c-.12.210-.08.470.12.610l2.030 1.580c-.5.300-.9.630-.9.940s.2.640.7.940l-2.030 1.580a.49.490 0 0 0-.12.610l1.920 3.320c.12.220.37.290.59.220l2.390-.96c.5.380 1.030.7 1.620.94l.36 2.540c.5.240.24.410.48.410h3.840c.24 0 .44-.17.470-.41l.36-2.540c.59-.24 1.130-.56 1.620-.94l2.390.96c.22.080.47 0 .59-.22l1.920-3.320c.12-.22.070-.47-.12-.61l-2.010-1.580zM12 15.600c-1.980 0-3.600-1.620-3.600-3.600s1.620-3.600 3.600-3.600 3.600 1.620 3.600 3.600-1.620 3.600-3.600 3.600z"/></svg>
<span class="c" style="left:706.500px;top:357.30px">M2</span>
<span class="c" style="letter-spacing:-0.42px;left:401.300px;top:352.15px">LIMPEZA MECANIZADA DE CAMADA VEGETAL, VEGETAÇÃO E PEQUENAS ÁRVORES</span>
<span class="c" style="letter-spacing:-0.338px;left:401.300px;top:362.45px">(DIÂMETRO DE TRONCO MENOR QUE 0,20 M), COM TRATOR DE ESTEIRAS. AF_03/2024</span>
<div class="row g" style="left:137px;top:375px;height:22px"></div>
<svg style="left:147.100px;top:381.1px" width="1.800" height="7.800" viewBox="0 0 1.800 7.800"><circle cx=".9" cy=".9" r="1.050" fill="#111"/><circle cx=".9" cy="3.900" r="1.050" fill="#111"/><circle cx=".9" cy="6.900" r="1.050" fill="#111"/></svg>
<span class="c u" style="letter-spacing:0.644px;left:177.600px;top:382.05px">3</span>
<span class="c" style="letter-spacing:-0.134px;left:401.300px;top:382.05px">Vedação/paredes e painéis</span>
<div class="row s" style="left:137px;top:397px;height:38.3px"></div>
<svg style="left:141.700px;top:408.75px" width="13.200" height="13.200" viewBox="0 0 24 24"><path fill="#111" d="M3 17.250V21h3.750L17.810 9.940l-3.750-3.750L3 17.250zM20.710 7.040a.996.996 0 0 0 0-1.410l-2.340-2.340a.996.996 0 0 0-1.410 0l-1.830 1.830 3.750 3.750 1.830-1.830z"/></svg>
<span class="c u" style="letter-spacing:-0.25px;left:177.600px;top:412.20px">3.1</span>
<span class="c" style="left:217.800px;top:412.20px">C</span>
<span class="c" style="letter-spacing:-0.355px;left:256.400px;top:412.20px">SINAPI</span>
<span class="c" style="letter-spacing:-0.126px;left:304.600px;top:412.20px">103328</span>
<svg style="left:359.300px;top:408.95px" width="13.800" height="13.800" viewBox="0 0 24 24"><path fill="#111" d="M19.140 12.940c.04-.3.060-.61.060-.94s-.02-.64-.07-.94l2.030-1.580a.49.49 0 0 0 .12-.61l-1.920-3.320a.488.488 0 0 0-.59-.22l-2.390.96c-.5-.38-1.030-.7-1.620-.94l-.36-2.540a.484.484 0 0 0-.48-.41h-3.840c-.24 0-.43.170-.47.410l-.36 2.540c-.59.240-1.130.570-1.620.94l-2.390-.96c-.22-.08-.47 0-.59.220L2.740 8.870c-.12.210-.08.470.12.610l2.030 1.580c-.5.300-.9.630-.9.940s.2.640.7.940l-2.030 1.580a.49.490 0 0 0-.12.610l1.920 3.320c.12.220.37.290.59.220l2.390-.96c.5.380 1.030.7 1.620.94l.36 2.540c.5.240.24.410.48.410h3.840c.24 0 .44-.17.470-.41l.36-2.540c.59-.24 1.130-.56 1.620-.94l2.390.96c.22.080.47 0 .59-.22l1.920-3.320c.12-.22.070-.47-.12-.61l-2.010-1.580zM12 15.600c-1.980 0-3.600-1.620-3.600-3.600s1.620-3.600 3.600-3.600 3.600 1.620 3.600 3.600-1.620 3.600-3.600 3.600z"/></svg>
<span class="c" style="left:706.500px;top:412.20px">M2</span>
<span class="c" style="letter-spacing:-0.362px;left:401.300px;top:401.90px">ALVENARIA DE VEDAÇÃO DE BLOCOS CERÂMICOS FURADOS NA HORIZONTAL DE 9X19X19</span>
<span class="c" style="letter-spacing:-0.416px;left:401.300px;top:412.20px">CM (ESPESSURA 9 CM) E ARGAMASSA DE ASSENTAMENTO COM PREPARO EM BETONEIRA.</span>
<span class="c" style="letter-spacing:-0.356px;left:401.300px;top:422.50px">AF_12/2021</span>
<div class="row g" style="left:137px;top:435.3px;height:21.5px"></div>
<svg style="left:147.100px;top:441.15px" width="1.800" height="7.800" viewBox="0 0 1.800 7.800"><circle cx=".9" cy=".9" r="1.050" fill="#111"/><circle cx=".9" cy="3.900" r="1.050" fill="#111"/><circle cx=".9" cy="6.900" r="1.050" fill="#111"/></svg>
<span class="c u" style="letter-spacing:0.644px;left:177.600px;top:442.10px">4</span>
<span class="c" style="letter-spacing:-0.131px;left:401.300px;top:442.10px">Esquadrias</span>
<div class="row w" style="left:137px;top:456.8px;height:38px"></div>
<span class="c" style="letter-spacing:-0.356px;left:401.300px;top:461.55px">JANELA DE CORRER, EM ALUMINIO PERFIL 25, 100 X 120 CM (A X L), 2 FLS MOVEIS, SEM</span>
<span class="c" style="letter-spacing:-0.411px;left:401.300px;top:471.85px">BANDEIRA, ACABAMENTO ACET OU BRILHANTE, BATENTE/REQUADRO DE 6 A 14 CM, COM</span>
<div class="abs" style="left:129px;top:465.500px;width:895px;height:7px;background:#f1f1f1;z-index:7"></div>

<!-- ======= CHAT ======= -->
<div id="chat">
  <div class="head">
    <svg style="left:13.9px;top:11.4px" width="9" height="8.600" viewBox="0 0 9 8.600"><path d="M9 4.300H1.200M4.600 .5L.9 4.300L4.600 8.100" stroke="#fff" stroke-width="1.200" fill="none"/></svg>
    <span class="t" style="letter-spacing:-0.38px;left:36.7px;top:9.200px;font-size:8.500px;font-weight:bold;color:#fff">Orçamento 31: CASA IRIS</span>
    <svg style="left:162.4px;top:11.600px" width="8.200" height="8.200" viewBox="0 0 8.200 8.200"><path d="M4.100 0V8.200M0 4.100H8.200" stroke="#fff" stroke-width="1.200"/></svg>
    <span class="t" style="left:190.3px;top:9.800px;font-size:12.500px;font-weight:bold;color:#fff;line-height:14px">?</span>
    <svg style="left:215.8px;top:9.700px" width="12.800" height="12.800" viewBox="0 0 24 24"><path fill="#fff" d="M19.140 12.940c.04-.3.060-.61.060-.94s-.02-.64-.07-.94l2.030-1.580a.49.49 0 0 0 .12-.61l-1.920-3.320a.488.488 0 0 0-.59-.22l-2.390.96c-.5-.38-1.030-.7-1.620-.94l-.36-2.540a.484.484 0 0 0-.48-.41h-3.840c-.24 0-.43.170-.47.410l-.36 2.540c-.59.240-1.130.570-1.620.94l-2.390-.96c-.22-.08-.47 0-.59.220L2.740 8.870c-.12.210-.08.470.12.610l2.030 1.580c-.5.300-.9.630-.9.940s.2.640.7.940l-2.030 1.580a.49.490 0 0 0-.12.610l1.920 3.320c.12.220.37.290.59.220l2.390-.96c.5.380 1.030.7 1.620.94l.36 2.540c.5.240.24.410.48.410h3.840c.24 0 .44-.17.470-.41l.36-2.540c.59-.24 1.130-.56 1.620-.94l2.390.96c.22.080.47 0 .59-.22l1.920-3.320c.12-.22.070-.47-.12-.61l-2.010-1.580zM12 15.600c-1.980 0-3.600-1.620-3.600-3.600s1.620-3.600 3.600-3.600 3.600 1.620 3.600 3.600-1.620 3.600-3.600 3.600z"/></svg>
    <svg style="left:246.2px;top:11.800px" width="8" height="8" viewBox="0 0 8 8"><path d="M.5 .5L7.500 7.500M7.500 .5L.5 7.500" stroke="#fff" stroke-width="1.300"/></svg>
  </div>
  <div class="body"></div>
  <div class="abs" style="left:0;top:29px;width:269px;height:208.500px;overflow:hidden"><div class="abs" style="left:0;top:-29px;width:269px;height:330px">
    <div class="bub d" style="left:33.5px;top:3px;width:200.700px;height:129.600px"></div>
    <div class="abs" style="left:38.8px;top:23px;width:188.7px;height:92.6px;border:1px solid #58584a;border-top:0;border-radius:0 0 3px 3px"></div>
    <div class="abs" style="left:88.3px;top:23px;width:1px;height:92.2px;background:#545448"></div>
    <div class="abs" style="left:200.7px;top:23px;width:1px;height:92.2px;background:#545448"></div>
    <div class="abs" style="left:38.8px;top:42px;width:188.7px;height:1px;background:#545448"></div>
    <div class="abs" style="left:38.8px;top:75.8px;width:188.7px;height:1px;background:#545448"></div>
    <span class="ct" style="letter-spacing:-0.028px;left:91px;top:30.5px">DEMÃO. AF_03/2024</span>
    <span class="ct j" style="left:91px;top:44.9px;width:105.700px">SOLEIRA EM MÁRMORE,</span>
    <span class="ct j" style="left:91px;top:53.6px;width:105.700px">LARGURA 15 CM, ESPESSURA 2,0</span>
    <span class="ct" style="letter-spacing:-0.026px;left:91px;top:62.2px">CM. AF_09/2020</span>
    <span class="ct j" style="left:91px;top:76.7px;width:105.700px">RODAPÉ CERÂMICO DE 7CM DE</span>
    <span class="ct j" style="left:91px;top:85.3px;width:105.700px">ALTURA COM PLACAS TIPO</span>
    <span class="ct j" style="left:91px;top:94.0px;width:105.700px">ESMALTADA DE DIMENSÕES</span>
    <span class="ct" style="letter-spacing:0.003px;left:91px;top:102.6px">60X60CM. AF_02/2023</span>
    <span class="mono" style="letter-spacing:-0.013px;left:42.8px;top:54.8px">98695/SINAPI</span>
    <span class="ct" style="left:210.6px;top:53.9px;font-weight:bold">M</span>
    <span class="mono" style="letter-spacing:-0.013px;left:42.8px;top:90.6px">88650/SINAPI</span>
    <span class="ct" style="left:210.6px;top:89.7px;font-weight:bold">M</span>
    <span class="tm" style="letter-spacing:-0.009px;left:38.8px;top:120.5px">07/08/2025 15:52</span>
    <div class="bub b" style="left:88.3px;top:136.4px;width:138.700px;height:27.500px"></div>
    <span class="cm" style="letter-spacing:-0.005px;left:93.7px;top:138.9px">Faça uma revisão geral desse orçamento.</span>
    <span class="tm" style="letter-spacing:-0.061px;left:93.7px;top:152.4px">06:14</span>
    <svg style="left:231.7px;top:136px" width="22" height="22" viewBox="0 0 31 31"><defs><clipPath id="av2"><circle cx="15.500" cy="15.500" r="14"/></clipPath></defs><circle cx="15.500" cy="15.500" r="15.200" fill="#2b6cae"/><circle cx="15.500" cy="15.500" r="14" fill="#f4f7fc"/><g clip-path="url(#av2)"><path d="M1 31Q2 20.500 10 19.500L15.500 21L21 19.500Q29 20.500 30 31Z" fill="#1f4f9e"/><rect x="12.600" y="15" width="5.800" height="6" fill="#2a5fb2"/><ellipse cx="15.500" cy="10.800" rx="5.200" ry="6.600" fill="#3a6fc4"/><path d="M10 9.500Q10 3.200 15.500 3.200Q21 3.200 21 9.500Q18.500 6.800 15.500 7Q12.500 6.800 10 9.500Z" fill="#1a3f86"/></g></svg>
    <div class="bub d" style="left:33.5px;top:167.7px;width:197.200px;height:39px"></div>
    <span class="cm j" style="left:38.8px;top:170.2px;width:186px">Vou iniciar a revisão do seu orçamento. Primeiro, vou</span>
    <span class="cm" style="letter-spacing:-0.011px;left:38.8px;top:181.7px">consultar todas as etapas e os itens já incluídos.</span>
    <span class="tm" style="letter-spacing:-0.062px;left:38.8px;top:195px">06:14</span>
    <svg style="left:6.65px;top:167.65px" width="22.500" height="22.500" viewBox="0 0 22.500 22.500"><defs><clipPath id="b1"><circle cx="11.250" cy="11.250" r="10.400"/></clipPath></defs><circle cx="11.250" cy="11.250" r="11.200" fill="#6aa9e6"/><circle cx="11.250" cy="11.250" r="10.400" fill="#b9c6ec"/><g clip-path="url(#b1)"><circle cx="4.500" cy="8" r="4.200" fill="#d3dcf5"/><circle cx="18.500" cy="9" r="4.500" fill="#cdd7f3"/><circle cx="5" cy="17" r="4" fill="#dfe6f8"/><circle cx="18" cy="17.500" r="3.500" fill="#a9b8e4"/><path d="M6.200 7.900Q5.300 14 7 15.200H15.500Q17.200 14 16.300 7.900Z" fill="#1e2748"/><path d="M3.500 22.500Q4.200 16.800 8.800 16.200L11.250 18.300L13.700 16.200Q18.300 16.800 19 22.500Z" fill="#7d95d0"/><path d="M9.900 13.500H12.600V17L11.250 19.500L9.900 17Z" fill="#ead4c6"/><path d="M8.300 8.300H14.200V12Q14.200 15.300 11.250 15.300Q8.300 15.300 8.300 12Z" fill="#efdccf"/><path d="M6.900 8.300Q6.900 2.300 11.250 2.300Q15.600 2.300 15.600 8.300Q11.250 7.300 6.900 8.300Z" fill="#fbfcff"/><path d="M6.400 8.100Q11.250 6.900 16.100 8.100V9Q11.250 7.900 6.400 9Z" fill="#e4e8f4"/><path d="M9.300 3V7M11.250 2.500V6.800M13.200 3V7" stroke="#dfe4f0" stroke-width=".5"/><circle cx="9.900" cy="10.700" r=".5" fill="#2a3560"/><circle cx="12.600" cy="10.700" r=".5" fill="#2a3560"/><path d="M10.700 13.300H11.800" stroke="#d9928c" stroke-width=".6"/></g></svg>
    <svg style="left:6.65px;top:209.65px" width="22.500" height="22.500" viewBox="0 0 22.500 22.500"><defs><clipPath id="b2"><circle cx="11.250" cy="11.250" r="10.400"/></clipPath></defs><circle cx="11.250" cy="11.250" r="11.200" fill="#6aa9e6"/><circle cx="11.250" cy="11.250" r="10.400" fill="#b9c6ec"/><g clip-path="url(#b2)"><circle cx="4.500" cy="8" r="4.200" fill="#d3dcf5"/><circle cx="18.500" cy="9" r="4.500" fill="#cdd7f3"/><circle cx="5" cy="17" r="4" fill="#dfe6f8"/><circle cx="18" cy="17.500" r="3.500" fill="#a9b8e4"/><path d="M6.200 7.900Q5.300 14 7 15.200H15.500Q17.200 14 16.300 7.900Z" fill="#1e2748"/><path d="M3.500 22.500Q4.200 16.800 8.800 16.200L11.250 18.300L13.700 16.200Q18.300 16.800 19 22.500Z" fill="#7d95d0"/><path d="M9.900 13.500H12.600V17L11.250 19.500L9.900 17Z" fill="#ead4c6"/><path d="M8.300 8.300H14.200V12Q14.200 15.300 11.250 15.300Q8.300 15.300 8.300 12Z" fill="#efdccf"/><path d="M6.900 8.300Q6.900 2.300 11.250 2.300Q15.600 2.300 15.600 8.300Q11.250 7.300 6.900 8.300Z" fill="#fbfcff"/><path d="M6.400 8.100Q11.250 6.900 16.100 8.100V9Q11.250 7.900 6.400 9Z" fill="#e4e8f4"/><path d="M9.300 3V7M11.250 2.500V6.800M13.200 3V7" stroke="#dfe4f0" stroke-width=".5"/><circle cx="9.900" cy="10.700" r=".5" fill="#2a3560"/><circle cx="12.600" cy="10.700" r=".5" fill="#2a3560"/><path d="M10.700 13.300H11.800" stroke="#d9928c" stroke-width=".6"/></g></svg>
    <div class="bub d" style="left:33.3px;top:210.1px;width:20.700px;height:19.900px;border-radius:5px"></div>
    <span class="t" style="left:39.4px;top:216.5px;font-size:7px;color:#8a8a8a;letter-spacing:1.500px;line-height:8px">...</span>
    <div class="abs" style="left:260.6px;top:29.5px;width:8px;height:207.500px;background:#f4f4f4"></div>
    <svg style="left:262.1px;top:33px" width="5" height="3" viewBox="0 0 5 3"><path d="M0 3L2.500 0L5 3Z" fill="#8a8a8a"/></svg>
    <svg style="left:262.1px;top:232px" width="5" height="3" viewBox="0 0 5 3"><path d="M0 0L2.500 3L5 0Z" fill="#6a6a6a"/></svg>
    <div class="abs" style="left:262.4px;top:219px;width:4.400px;height:8.500px;background:#5c5c5c;border-radius:2.200px"></div>
  </div></div>
  <div class="abs" style="left:0;top:237px;width:269px;height:1px;background:#e3e4e6"></div>
  <span class="ft" style="letter-spacing:-0.204px;left:6.8px;top:244.6px">Status do chat: Processando</span>
  <span class="ft" style="letter-spacing:-0.241px;left:6.8px;top:253.8px">solicitação...</span>
  <span class="ft" style="letter-spacing:-0.177px;left:149.6px;top:244.6px">Créditos</span>
  <span class="ft" style="letter-spacing:-0.202px;left:140.5px;top:253.8px">disponíveis:</span>
  <span class="ft" style="letter-spacing:-0.023px;left:206.5px;top:244.6px">[ADMIN]</span>
  <span class="ft" style="letter-spacing:-0.223px;left:199.5px;top:253.8px">usados:222</span>
  <div class="abs" style="left:6.8px;top:269.3px;width:224.900px;height:39.600px;background:#fff;border:1px solid #a2a2a2;border-radius:3px"></div>
  <span class="ft" style="letter-spacing:-0.043px;left:11.8px;top:274px;color:#777;font-family:'Liberation Sans',sans-serif;font-size:7px">Digite sua mensagem...</span>
  <div class="abs" style="left:236.1px;top:276.2px;width:25.600px;height:25.600px;border-radius:50%;background:#85da79"></div>
  <svg style="left:243.9px;top:284px" width="10" height="10" viewBox="0 0 10 10"><circle cx="5" cy="5" r="3.900" stroke="#3d7a3a" stroke-width="1" fill="none"/><path d="M5 1.100A3.900 3.900 0 0 1 8.900 5" stroke="#c9f0c2" stroke-width="1.200" fill="none"/></svg>
  <span class="ft" style="letter-spacing:-0.903px;left:55px;top:311.6px;font-size:7px;color:#8c8c8c">A IA pode cometer erros. Considere verificar informações importantes.</span>
</div>

</body>
</html>
